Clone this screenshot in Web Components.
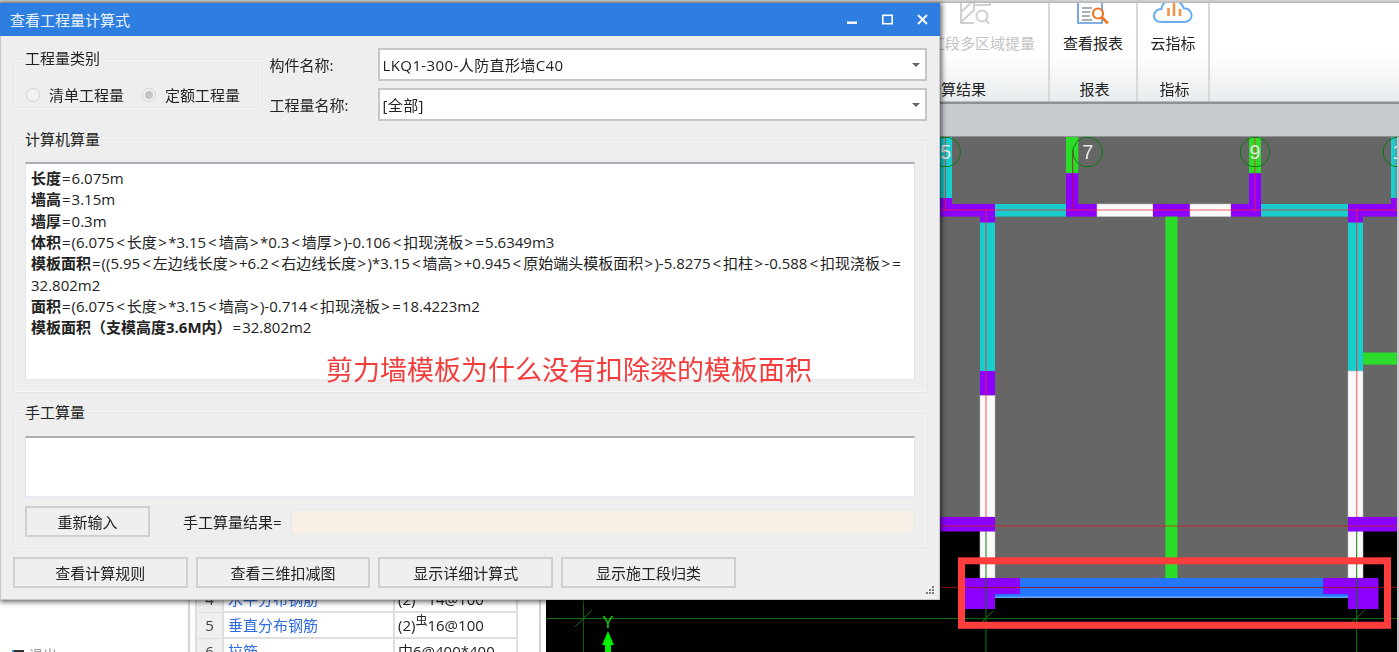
<!DOCTYPE html>
<html lang="zh-CN">
<head>
<meta charset="utf-8">
<title>查看工程量计算式</title>
<style>
  html, body { margin: 0; height: 100%; overflow: hidden; background: #fff; }
  body { font: 15px "Open Sans", "Noto Sans CJK SC", "Liberation Sans", sans-serif; color: #222; }
</style>
</head>
<body>
<gl-app>
  <gl-ribbon slot="ribbon">
    <gl-ribbon-group label="计算结果" width="122" align="left">
      <gl-ribbon-button label="工段多区域提量" icon="area" disabled></gl-ribbon-button>
    </gl-ribbon-group>
    <gl-ribbon-group label="报表" width="88">
      <gl-ribbon-button label="查看报表" icon="report"></gl-ribbon-button>
    </gl-ribbon-group>
    <gl-ribbon-group label="指标" width="72">
      <gl-ribbon-button label="云指标" icon="cloud"></gl-ribbon-button>
    </gl-ribbon-group>
  </gl-ribbon>
  <gl-side-panel slot="side">
    <gl-rebar-row num="4" name="水平分布钢筋">(2)<sup>⾍</sup>14@100</gl-rebar-row>
    <gl-rebar-row num="5" name="垂直分布钢筋">(2)<sup>⾍</sup>16@100</gl-rebar-row>
    <gl-rebar-row num="6" name="拉筋">中6@400*400</gl-rebar-row>
  </gl-side-panel>
  <gl-canvas slot="canvas"></gl-canvas>

  <gl-dialog slot="dialog" title-text="查看工程量计算式">
    <gl-top-row>
      <gl-group-box slot="kind" legend="工程量类别" pad="24 8 0 10.500">
        <gl-radio-row>
          <gl-radio label="清单工程量"></gl-radio>
          <gl-radio label="定额工程量" checked></gl-radio>
        </gl-radio-row>
      </gl-group-box>
      <gl-combo slot="fields" label="构件名称:" value="LKQ1-300-人防直形墙C40"></gl-combo>
      <gl-combo slot="fields" label="工程量名称:" value="[全部]"></gl-combo>
    </gl-top-row>

    <gl-group-box legend="计算机算量" top="19" pad="20 10 10 10">
      <gl-text-area height="219">
        <gl-line label="长度" f="=6.075m"></gl-line>
        <gl-line label="墙高" f="=3.15m"></gl-line>
        <gl-line label="墙厚" f="=0.3m"></gl-line>
        <gl-line label="体积" f="=(6.075&lt;长度&gt;*3.15&lt;墙高&gt;*0.3&lt;墙厚&gt;)-0.106&lt;扣现浇板&gt;=5.6349m3"></gl-line>
        <gl-line label="模板面积" f="=((5.95&lt;左边线长度&gt;+6.2&lt;右边线长度&gt;)*3.15&lt;墙高&gt;+0.945&lt;原始端头模板面积&gt;)-5.8275&lt;扣柱&gt;-0.588&lt;扣现浇板&gt;="></gl-line>
        <gl-line f="32.802m2"></gl-line>
        <gl-line label="面积" f="=(6.075&lt;长度&gt;*3.15&lt;墙高&gt;)-0.714&lt;扣现浇板&gt;=18.4223m2"></gl-line>
        <gl-line label="模板面积（支模高度3.6M内）" f="=32.802m2"></gl-line>
      </gl-text-area>
    </gl-group-box>

    <gl-group-box legend="手工算量" top="20" pad="21 10 9 10">
      <gl-text-area height="62"></gl-text-area>
      <gl-manual-row>
        <gl-button slot="action" width="125">重新输入</gl-button>
        <span slot="label">手工算量结果=</span>
      </gl-manual-row>
    </gl-group-box>

    <gl-button-row>
      <gl-button width="174.700">查看计算规则</gl-button>
      <gl-button width="174.700">查看三维扣减图</gl-button>
      <gl-button width="174.700">显示详细计算式</gl-button>
      <gl-button width="174.700">显示施工段归类</gl-button>
    </gl-button-row>
  </gl-dialog>

  <gl-note slot="note">剪力墙模板为什么没有扣除梁的模板面积</gl-note>
</gl-app>

<script>
  // 小工具：把模板字符串挂到 shadow root 上
  const mount = (el, html) => {
    el.attachShadow({ mode: "open" }).innerHTML = html;
  };

  class GlApp extends HTMLElement {
    constructor() {
      super();
      mount(this, `
        <style>
          :host { display: block; position: relative; width: 1399px; height: 652px; overflow: hidden; filter: blur(.35px); }
          .edge { height: 3px; background: linear-gradient(#d8d8d8, #b4b4b4); }
          .tabs { height: 33px; background: #c8cbd0; border-bottom: 1px solid #8e9196; box-sizing: border-box; }
          .work { display: flex; height: 515px; }
        </style>
        <div class="edge"></div>
        <slot name="ribbon"></slot>
        <div class="tabs"></div>
        <div class="work">
          <slot name="side"></slot>
          <slot name="canvas"></slot>
        </div>
        <slot name="dialog"></slot>
        <slot name="note"></slot>
      `);
    }
  }

  class GlRibbon extends HTMLElement {
    constructor() {
      super();
      mount(this, `
        <style>
          :host { display: flex; height: 101px; box-sizing: border-box; padding-left: 928px; padding-bottom: 3px;
                  background: linear-gradient(#fff 50%, #e8ecee 97%, #8f9295 98%); }
        </style>
        <slot></slot>
      `);
    }
  }

  class GlRibbonGroup extends HTMLElement {
    constructor() {
      super();
      const left = this.getAttribute("align") === "left";
      mount(this, `
        <style>
          :host { display: flex; flex-direction: column; box-sizing: border-box; width: ${this.getAttribute("width")}px;
                  border-right: 2px solid #d6d8da; align-items: ${left ? "flex-start" : "center"}; }
          .body { flex: 1; }
          .label { line-height: 20px; margin-bottom: 2px; ${left ? "margin-left: -2px;" : "padding-left: 3px;"} }
        </style>
        <div class="body"><slot></slot></div>
        <div class="label">${this.getAttribute("label")}</div>
      `);
    }
  }

  const RIBBON_ICONS = {
    area: `<svg width="32" height="21" viewBox="0 0 32 21" style="margin-left:32px" fill="none" stroke="#cfcfcf" stroke-width="2">
        <path d="M1 -2V20H14M1 9L13 -2M1 19L14 7M14 -2V8M14 2H30V-2"/>
        <circle cx="22" cy="13" r="5.5"/><path d="M26 17.5L29 20.5"/>
      </svg>`,
    report: `<svg width="32" height="21" viewBox="0 0 32 21" fill="none">
        <path d="M1 -2V20H25V-2" stroke="#5a94d8" stroke-width="1.6"/>
        <path d="M5 5H15M5 9H13M5 13H13M5 17H15" stroke="#8c959e" stroke-width="1.5"/>
        <circle cx="21" cy="10.5" r="5" fill="#fff" stroke="#ee7423" stroke-width="2.2"/>
        <path d="M25 14.5L30 19.5" stroke="#ee7423" stroke-width="2.8" stroke-linecap="round"/>
      </svg>`,
    cloud: `<svg width="40" height="21" viewBox="0 0 40 21" fill="none">
        <path d="M9 19H31C36 19 39 15.500 38.500 11.500C38 7 34 5 31 5.500C29 0 24 -3 18 -3C13 -3 9 1 8.500 6C4 6 1 9 1 13C1 17 4.500 19 9 19Z" stroke="#6aaef2" stroke-width="2" />
        <path d="M15.500 5V13M21 0V13M27 6V13" stroke="#f0954a" stroke-width="2.600"/>
      </svg>`
  };

  class GlRibbonButton extends HTMLElement {
    constructor() {
      super();
      const off = this.hasAttribute("disabled");
      mount(this, `
        <style>
          :host { display: flex; flex-direction: column; align-items: ${off ? "flex-start" : "center"}; color: ${off ? "#c4c4c4" : "inherit"}; }
          svg { display: block; overflow: hidden; }
          .icons { height: 21px; }
          .text { line-height: 20px; margin-top: 9px; white-space: nowrap; ${off ? "margin-left: 2px;" : ""} }
        </style>
        <div class="icons">${RIBBON_ICONS[this.getAttribute("icon")]}</div>
        <div class="text">${this.getAttribute("label")}</div>
      `);
    }
  }

  class GlSidePanel extends HTMLElement {
    constructor() {
      super();
      mount(this, `
        <style>
          :host { display: flex; box-sizing: border-box; width: 546px; height: 515px; background: #fff; overflow: hidden; }
          .tree { width: 190px; box-sizing: border-box; border-right: 2px solid #d2d2d2; padding: 508px 0 0 12px; color: #999; font-size: 14px; display: flex; gap: 5px; line-height: 20px; }
          .tree i { display: block; width: 10px; height: 12px; background: #333; border-left: 2px solid #3a8ee0; margin-top: 5px; }
          .props { flex: 1; padding: 450px 0 0 5px; box-sizing: border-box; border-right: 2px solid #d2d2d2; margin-right: 5px; }
          .grid { width: 323px; }
        </style>
        <div class="tree"><i></i><span>退出</span></div>
        <div class="props"><div class="grid"><slot></slot></div></div>
      `);
    }
  }

  class GlRebarRow extends HTMLElement {
    constructor() {
      super();
      mount(this, `
        <style>
          :host { display: grid; grid-template-columns: 27px 171px 1fr; height: 26px; box-sizing: border-box;
                  line-height: 25px; border: solid #dedede; border-width: 0 2px 2px 2px; white-space: nowrap; }
          .n { background: #efefef; border-right: 2px solid #dedede; text-align: center; color: #444; }
          .t { color: #2f6ce0; padding-left: 4px; border-right: 2px solid #dedede; }
          .v { padding-left: 3px; overflow: hidden; }
          ::slotted(sup) { font-size: 12px; line-height: 0; }
        </style>
        <div class="n">${this.getAttribute("num")}</div>
        <div class="t">${this.getAttribute("name")}</div>
        <div class="v"><slot></slot></div>
      `);
    }
  }

  class GlCanvas extends HTMLElement {
    constructor() {
      super();
      // 坐标直接用截图里的像素坐标，viewBox 从 (546,137) 开始
      const r = (x1, y1, x2, y2, c) => `<rect x="${x1}" y="${y1}" width="${x2 - x1}" height="${y2 - y1}" fill="${c}"/>`;
      const line = (x1, y1, x2, y2, c, w = 1, o = 1) => `<line x1="${x1}" y1="${y1}" x2="${x2}" y2="${y2}" stroke="${c}" stroke-width="${w}" opacity="${o}"/>`;
      const P = "#8b00ff", C = "#19cdcd", G = "#2bdc2b", W = "#fafafa", B = "#2476ff";
      const white = (x1, y1, x2, y2) => `<rect x="${x1}" y="${y1}" width="${x2 - x1}" height="${y2 - y1}" fill="${W}" stroke="#bdbdbd" stroke-width=".6"/>`;
      const bubble = (x, t) => `<polygon points="${[...Array(12).keys()].map(i => {
          const a = (i + .5) * Math.PI / 6;
          return (x + 15 * Math.cos(a)).toFixed(1) + "," + (152 + 15 * Math.sin(a)).toFixed(1);
        }).join(" ")}" fill="none" stroke="#0b7a14" stroke-width="1"/>
        <text x="${x}" y="159" text-anchor="middle" font-family="Liberation Sans" font-size="20" fill="#e8e8e8">${t}</text>`;
      mount(this, `
        <style>
          :host { display: block; width: 853px; height: 515px; background: #c4c8cc; }
          svg { display: block; }
        </style>
        <svg width="851" height="515" viewBox="546 137 851 515">
          ${r(546, 137, 1397, 652, "#000")}
          ${r(546, 137, 1397, 531, "#666")}
          ${r(995, 531, 1348, 578, "#666")}

          <!-- 上部墙 -->
          ${r(940, 137, 952, 198, C)}
          ${r(1066, 137, 1078.3, 173.300, G)}
          ${r(1249, 137, 1261, 173.300, G)}
          ${r(1391, 137, 1397, 198, C)}
          ${r(1066, 173.300, 1078.300, 204, P)}
          ${r(1249, 173.300, 1261, 204, P)}
          ${r(940, 198, 952, 204, P)}
          ${r(1391, 198, 1397, 204, P)}
          ${r(940, 204, 995, 216.600, P)}
          ${r(995, 204, 1066, 216.600, C)}
          ${r(1066, 204, 1097, 216.600, P)}
          ${white(1097, 204, 1153, 216.600)}
          ${r(1153, 204, 1190, 216.600, P)}
          ${white(1190, 204, 1231, 216.600)}
          ${r(1231, 204, 1261, 216.600, P)}
          ${r(1261, 204, 1348, 216.600, C)}
          ${r(1348, 204, 1397, 216.600, P)}

          <!-- 竖墙 -->
          ${r(980, 216.600, 995, 222.600, P)}
          ${r(1348, 216.600, 1363, 222.600, P)}
          ${r(980, 222.600, 995, 371, C)}
          ${r(1348, 222.600, 1363, 371, C)}
          ${r(980, 371, 995, 395.500, P)}
          ${white(980, 395.500, 995, 517)}
          ${white(980, 531, 995, 578)}
          ${white(1348, 371, 1363, 517)}
          ${white(1348, 531, 1363, 578)}
          ${r(940, 517, 995, 531.500, P)}
          ${r(1348, 517, 1397, 531.500, P)}
          ${r(1165.400, 216.600, 1177.400, 578, G)}
          ${r(1363, 352.500, 1397, 364.600, G)}

          <!-- 底部梁 -->
          ${r(995, 578, 1348, 597.500, B)}
          ${r(995, 596.500, 1348, 598, "#6aa6f5")}
          ${r(965, 578, 1020, 594, P)}
          ${r(965, 594, 995, 609, P)}
          ${r(1323.300, 578, 1378.500, 594, P)}
          ${r(1348, 594, 1378.500, 609, P)}

          <!-- 轴线 -->
          ${line(546, 618.500, 1397, 618.500, "#0b6e0b")}
          ${line(583.500, 600, 583.500, 652, "#0b5e0b")}
          ${line(575, 627, 592, 610, "#0b6e0b")}
          ${line(986, 531, 986, 652, "#0f7a0f")}
          ${line(1356.700, 531, 1356.700, 652, "#0f7a0f")}
          ${line(982, 622, 993, 611, "#0f7a0f")}
          ${line(1352, 622, 1365, 610, "#0f7a0f")}
          ${line(945.500, 137, 945.500, 210, "#ff2020", 1, .7)}
          ${line(1072.700, 150, 1072.700, 210, "#b01030", 1, .9)}
          ${line(1255, 137, 1255, 210, "#ff2020", 1, .8)}
          ${line(1396, 137, 1396, 210, "#ff2020", 1, .5)}
          ${line(546, 210, 1397, 210, "#ff2030", 1, .75)}
          ${line(986, 210, 986, 517, "#ff2030", 1.200, .65)}
          ${line(1356.700, 210, 1356.700, 517, "#ff2030", 1.200, .65)}
          ${line(546, 526, 1397, 526, "#d02020", 1, .8)}
          ${line(546, 587.500, 1397, 587.500, "#a01010", 1, .8)}

          ${bubble(945.700, "5")}
          ${bubble(1087.700, "7")}
          ${bubble(1255, "9")}
          ${bubble(1398, "1")}

          <!-- 坐标轴 -->
          <text x="608" y="628" text-anchor="middle" font-family="Liberation Sans" font-size="17" fill="#0cd40c">Y</text>
          <path d="M608 631L614 645H611V652H605V645H602Z" fill="#00f000"/>

          <!-- 红框标注 -->
          <rect x="961.500" y="560.800" width="426" height="64.500" fill="none" stroke="#ff3d3d" stroke-width="7"/>
        </svg>
      `);
    }
  }

  class GlDialog extends HTMLElement {
    constructor() {
      super();
      mount(this, `
        <style>
          :host { display: block; position: absolute; left: 0; top: 3px; width: 940px; height: 597px; box-sizing: border-box;
                  background: #eee; box-shadow: 1px 1px 5px 1px rgba(0,0,0,.6); border: 1px solid #c4c9d0; border-top: 0; }
          .title { display: flex; align-items: center; justify-content: space-between; height: 33px; margin: 0 -1px;
                   background: #2d7ee0; color: #eaf2fc; padding: 0 12px 0 10px; }
          .controls { display: flex; gap: 24px; }
          .body { padding: 12px 12px 0 12px; }
          .grip { position: absolute; right: 4px; bottom: 3px; }
          svg { display: block; }
        </style>
        <div class="title">
          <span>${this.getAttribute("title-text")}</span>
          <span class="controls">
            <svg width="11" height="11" viewBox="0 0 11 11"><rect y="7.500" width="10" height="2.400" fill="#fff"/></svg>
            <svg width="11" height="11" viewBox="0 0 11 11" fill="none"><rect x=".8" y="1.300" width="9.400" height="8.400" stroke="#fff" stroke-width="1.600"/></svg>
            <svg width="11" height="11" viewBox="0 0 11 11" fill="none"><path d="M1 1L10 10M10 1L1 10" stroke="#fff" stroke-width="1.800"/></svg>
          </span>
        </div>
        <div class="body"><slot></slot></div>
        <svg class="grip" width="10" height="10" viewBox="0 0 10 10" fill="#7c7c7c">
          <rect x="7" y="0" width="2" height="2"/><rect x="4" y="3" width="2" height="2"/><rect x="7" y="3" width="2" height="2"/>
          <rect x="1" y="6" width="2" height="2"/><rect x="4" y="6" width="2" height="2"/><rect x="7" y="6" width="2" height="2"/>
        </svg>
      `);
    }
  }

  class GlTopRow extends HTMLElement {
    constructor() {
      super();
      mount(this, `
        <style>
          :host { display: flex; height: 73px; }
          .kind { padding-top: 11px; width: 249px; margin-right: 8px; box-sizing: border-box; }
          .fields { flex: 1; display: flex; flex-direction: column; gap: 7px; }
        </style>
        <div class="kind"><slot name="kind"></slot></div>
        <div class="fields"><slot name="fields"></slot></div>
      `);
    }
  }

  class GlGroupBox extends HTMLElement {
    constructor() {
      super();
      const top = this.getAttribute("top") || 0;
      const pad = (this.getAttribute("pad") || "24 8 0 8").split(" ").map(v => v + "px").join(" ");
      mount(this, `
        <style>
          :host { display: block; position: relative; box-sizing: border-box; margin-top: ${top}px; padding: ${pad};
                  border: 2px solid #f6f6f6; outline: 1px solid #e6e6e6; outline-offset: -1px; }
          .legend { position: absolute; left: 8px; top: -13px; line-height: 20px; background: #eee; padding: 0 2px; }
        </style>
        <div class="legend">${this.getAttribute("legend")}</div>
        <slot></slot>
      `);
    }
  }

  class GlRadioRow extends HTMLElement {
    constructor() {
      super();
      mount(this, `
        <style>:host { display: flex; gap: 17.500px; }</style>
        <slot></slot>
      `);
    }
  }

  class GlRadio extends HTMLElement {
    constructor() {
      super();
      const on = this.hasAttribute("checked");
      mount(this, `
        <style>
          :host { display: flex; align-items: center; gap: 9.500px; line-height: 20px; white-space: nowrap; }
          .dot { width: 14px; height: 14px; box-sizing: border-box; border-radius: 50%; border: 1.500px solid #d2d2d2; background: #f2f2f2; display: grid; place-items: center; }
          .dot i { width: 8px; height: 8px; border-radius: 50%; background: #c4c4c4; }
        </style>
        <span class="dot">${on ? "<i></i>" : ""}</span>
        <span>${this.getAttribute("label")}</span>
      `);
    }
  }

  class GlCombo extends HTMLElement {
    constructor() {
      super();
      mount(this, `
        <style>
          :host { display: flex; align-items: center; height: 33px; }
          .label { width: 108px; flex: none; white-space: nowrap; margin-left: -.5px; }
          .box { flex: 1; height: 33px; box-sizing: border-box; background: #fff; border: 2px solid #c6c6c6; display: flex; align-items: center; justify-content: space-between; padding: 0 5px 0 3px; letter-spacing: .4px; }
          .arrow { width: 0; height: 0; border: 4px solid transparent; border-top: 4px solid #666; border-bottom: 0; }
        </style>
        <span class="label">${this.getAttribute("label")}</span>
        <div class="box"><span>${this.getAttribute("value")}</span><span class="arrow"></span></div>
      `);
    }
  }

  class GlTextArea extends HTMLElement {
    constructor() {
      super();
      mount(this, `
        <style>
          :host { display: block; box-sizing: border-box; height: ${this.getAttribute("height")}px; background: #fff; padding: 4px 5px;
                  border: 1px solid #e0e4ec; border-top: 2px solid #acaeb6; border-bottom: 2px solid #e8ebef; }
        </style>
        <slot></slot>
      `);
    }
  }

  class GlLine extends HTMLElement {
    constructor() {
      super();
      const label = this.getAttribute("label");
      // 尖括号和等号在原图里字距更宽，单独包一层
      const wrap = { "<": '<span class="lt">&lt;</span>', ">": '<span class="gt">&gt;</span>', "=": '<span class="eq">=</span>' };
      const formula = (this.getAttribute("f") || "").replace(/[<>=]/g, c => wrap[c]);
      mount(this, `
        <style>
          :host { display: block; height: 21.330px; line-height: 21.330px; white-space: nowrap; }
          b { font-weight: 700; }
          .lt { margin: 0 2px; }
          .gt { margin: 0 1.350px; }
          .eq { margin: 0 1px; }
        </style>
        ${label ? `<b>${label}</b>` : ""}${formula}
      `);
    }
  }

  class GlManualRow extends HTMLElement {
    constructor() {
      super();
      mount(this, `
        <style>
          :host { display: flex; align-items: center; margin-top: 8px; height: 31px; }
          .label { margin-left: 33px; width: 107px; flex: none; white-space: nowrap; padding-bottom: 1px; }
          .result { flex: 1; height: 26px; box-sizing: border-box; background: #f8efe6; border: 2px solid #ebebeb; }
        </style>
        <slot name="action"></slot>
        <span class="label"><slot name="label"></slot></span>
        <div class="result"></div>
      `);
    }
  }

  class GlButton extends HTMLElement {
    constructor() {
      super();
      mount(this, `
        <style>
          :host { display: flex; align-items: center; justify-content: center; box-sizing: border-box; flex: none; padding-bottom: 1px;
                  width: ${this.getAttribute("width")}px; height: 31px; background: #efefef; border: 2px solid #cfcfcf; white-space: nowrap; }
        </style>
        <slot></slot>
      `);
    }
  }

  class GlButtonRow extends HTMLElement {
    constructor() {
      super();
      mount(this, `
        <style>:host { display: flex; gap: 8px; margin-top: 9px; }</style>
        <slot></slot>
      `);
    }
  }

  class GlNote extends HTMLElement {
    constructor() {
      super();
      mount(this, `
        <style>
          :host { position: absolute; left: 326px; top: 350px; font-size: 27px; line-height: 40px; color: #f43c3c; white-space: nowrap; }
        </style>
        <slot></slot>
      `);
    }
  }

  customElements.define("gl-app", GlApp);
  customElements.define("gl-ribbon", GlRibbon);
  customElements.define("gl-ribbon-group", GlRibbonGroup);
  customElements.define("gl-ribbon-button", GlRibbonButton);
  customElements.define("gl-side-panel", GlSidePanel);
  customElements.define("gl-rebar-row", GlRebarRow);
  customElements.define("gl-canvas", GlCanvas);
  customElements.define("gl-dialog", GlDialog);
  customElements.define("gl-top-row", GlTopRow);
  customElements.define("gl-group-box", GlGroupBox);
  customElements.define("gl-radio-row", GlRadioRow);
  customElements.define("gl-radio", GlRadio);
  customElements.define("gl-combo", GlCombo);
  customElements.define("gl-text-area", GlTextArea);
  customElements.define("gl-line", GlLine);
  customElements.define("gl-manual-row", GlManualRow);
  customElements.define("gl-button", GlButton);
  customElements.define("gl-button-row", GlButtonRow);
  customElements.define("gl-note", GlNote);
</script>
</body>
</html>
